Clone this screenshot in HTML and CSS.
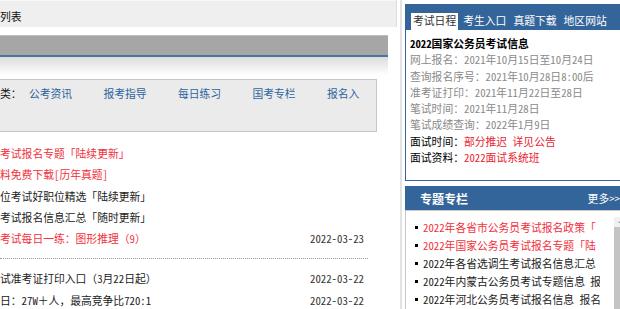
FILE: index.html
```html
<!DOCTYPE html>
<html lang="zh-CN">
<head>
<meta charset="UTF-8">
<title>公务员考试</title>
<link rel="stylesheet" href="styles.css">
</head>
<body>
<div class="page">
    <div class="main">
        <div class="list-head"><span class="list-name">列表</span></div>
        <div class="banner"></div>
        <div class="banner-shade"></div>

        <div class="cat-box">
            <span class="cat-label">类：</span>
            <div class="cat-links">
                <a href="#">公考资讯</a>
                <a href="#">报考指导</a>
                <a href="#">每日练习</a>
                <a href="#">国考专栏</a>
                <a href="#">报名入</a>
            </div>
        </div>

        <ul class="news">
            <li class="hot"><span class="title">考试报名专题「陆续更新」</span></li>
            <li class="hot"><span class="title">料免费下载[历年真题]</span></li>
            <li><span class="title">位考试好职位精选「陆续更新」</span></li>
            <li><span class="title">考试报名信息汇总「随时更新」</span></li>
            <li class="hot"><span class="title">考试每日一练：图形推理（9）</span><span class="date">2022-03-23</span></li>
        </ul>
        <div class="sep"></div>
        <ul class="news news-more">
            <li><span class="title">试准考证打印入口（3月22日起）</span><span class="date">2022-03-22</span></li>
            <li><span class="title">日：27W＋人，最高竞争比720:1</span><span class="date">2022-03-22</span></li>
        </ul>
    </div>

    <div class="divider"></div>

    <div class="side">
        <div class="sched">
            <ul class="tabs">
                <li class="active">考试日程</li>
                <li>考生入口</li>
                <li>真题下载</li>
                <li>地区网站</li>
            </ul>
            <div class="sched-body">
                <div class="sched-title">2022国家公务员考试信息</div>
                <div class="dim">网上报名：2021年10月15日至10月24日</div>
                <div class="dim">查询报名序号：2021年10月28日8:00后</div>
                <div class="dim">准考证打印：2021年11月22日至28日</div>
                <div class="dim">笔试时间：2021年11月28日</div>
                <div class="dim">笔试成绩查询：2022年1月9日</div>
                <div>面试时间：<a class="red" href="#">部分推迟</a> <a class="red" href="#">详见公告</a></div>
                <div>面试资料：<a class="red" href="#">2022面试系统班</a></div>
            </div>
        </div>

        <div class="topics">
            <div class="topics-head">
                <h3>专题专栏</h3>
                <a href="#" class="more">更多&gt;&gt;</a>
            </div>
            <div class="topics-body">
                <ul class="topic-list">
                    <li class="hot">2022年各省市公务员考试报名政策「</li>
                    <li class="hot">2022年国家公务员考试报名专题「陆</li>
                    <li>2022年各省选调生考试报名信息汇总</li>
                    <li>2022年内蒙古公务员考试专题信息 报</li>
                    <li>2022年河北公务员考试报名信息 报名</li>
                </ul>
                <div class="scroll">
                    <span class="scroll-up"></span>
                    <span class="scroll-thumb"></span>
                </div>
            </div>
        </div>
    </div>
</div>
</body>
</html>
```

FILE: styles.css
```css
body {
    margin: 0;
    width: 620px;
    height: 309px;
    overflow: hidden;
    background-color: #ffffff;
    color: #222;
    font-family: "Noto Sans Mono CJK SC", "Noto Sans CJK SC", sans-serif;
    font-size: 10.8px;
}

a {
    text-decoration: none;
}

ul {
    list-style: none;
    margin: 0;
    padding: 0;
}

.page {
    display: flex;
    align-items: flex-start;
    width: 640px;
    height: 309px;
}

/* left column */
.main {
    width: 397px;
    flex: none;
}

.list-head {
    width: 396px;
    height: 24px;
    padding-top: 2px;
    line-height: 26px;
    background-color: #efefef;
    border-top: 1px solid #f7f7f7;
    border-right: 1px solid #dcdcdc;
    box-sizing: content-box;
    white-space: nowrap;
}

.list-name {
    color: #111;
}

.banner {
    margin-top: 8px;
    width: 388px;
    height: 19px;
    background-color: #a6a6a6;
    border-top: 1px solid #bdbdbd;
    border-bottom: 2px solid #4a74a2;
}

.banner-shade {
    width: 388px;
    height: 18px;
    background: linear-gradient(#dcdcdc, #ffffff);
}

.cat-box {
    display: flex;
    margin-top: 4px;
    width: 376px;
    height: 46px;
    padding-top: 5px;
    line-height: 16px;
    background-color: #ebebeb;
    border: 1px solid #c6c6c6;
    border-left: none;
    white-space: nowrap;
}

.cat-label {
    color: #111;
}

.cat-links {
    display: flex;
    gap: 31.3px;
    margin-left: 7.4px;
}

.cat-links a {
    color: #2d64a0;
}

.news {
    margin-top: 11px;
    width: 364px;
}

.news li {
    display: flex;
    justify-content: space-between;
    height: 21.3px;
    line-height: 21.3px;
    white-space: nowrap;
}

.news .hot {
    color: #f2303c;
}

.news .date {
    color: #333;
}

.sep {
    width: 368px;
    margin: 9px 0;
    border-top: 1px dotted #9a9a9a;
}

.news-more {
    margin-top: 0;
}

.divider {
    flex: none;
    width: 2px;
    height: 309px;
    margin-left: 3px;
    background-color: #e3e3e3;
}

/* right column */
.side {
    flex: none;
    width: 230px;
    margin-top: 4px;
    margin-left: 3px;
}

.sched {
    border: 1px solid #34659a;
    border-right: none;
}

.tabs {
    display: flex;
    padding: 8px 0 0 5px;
    background-color: #34659a;
}

.tabs li {
    height: 17px;
    padding: 0 2px;
    margin-right: 3px;
    line-height: 15px;
    color: #ffffff;
    white-space: nowrap;
}

.tabs li.active {
    background-color: #ffffff;
    color: #333;
}

.sched-body {
    padding: 5px 4px 15px;
    line-height: 16.3px;
    color: #000;
    white-space: nowrap;
}

.sched-title {
    font-weight: bold;
}

.dim {
    color: #8a8a8a;
}

.red {
    color: #ea2430;
}

.topics {
    margin-top: 5px;
}

.topics-head {
    display: flex;
    align-items: center;
    height: 24px;
    background-color: #34659a;
    color: #ffffff;
}

.topics-head h3 {
    margin: 0 0 0 15px;
    font-size: 12px;
    font-weight: bold;
}

.more {
    margin-left: auto;
    padding-right: 15px;
    color: #ffffff;
}

.topics-body {
    display: flex;
    height: 98px;
    border: 1px solid #c9c9c9;
    border-right: none;
}

.topic-list {
    width: 185px;
    padding: 7px 0 0 9px;
    overflow: hidden;
}

.topic-list li {
    display: flex;
    align-items: center;
    height: 18px;
    white-space: nowrap;
}

.topic-list li::before {
    content: "";
    flex: none;
    width: 3px;
    height: 3px;
    margin-right: 5px;
    background-color: #000;
}

.topic-list .hot {
    color: #f2303c;
}

.scroll {
    display: flex;
    flex-direction: column;
    width: 16px;
    margin: 6px 0 0 14px;
}

.scroll-up {
    position: relative;
    height: 10px;
    background-color: #f0f0f0;
}

.scroll-up::after {
    content: "";
    position: absolute;
    left: 4px;
    top: 3px;
    border: 3px solid transparent;
    border-bottom-color: #a0a0a0;
    border-top: none;
}

.scroll-thumb {
    flex: 1;
    background-color: #c4c4c4;
}
```
